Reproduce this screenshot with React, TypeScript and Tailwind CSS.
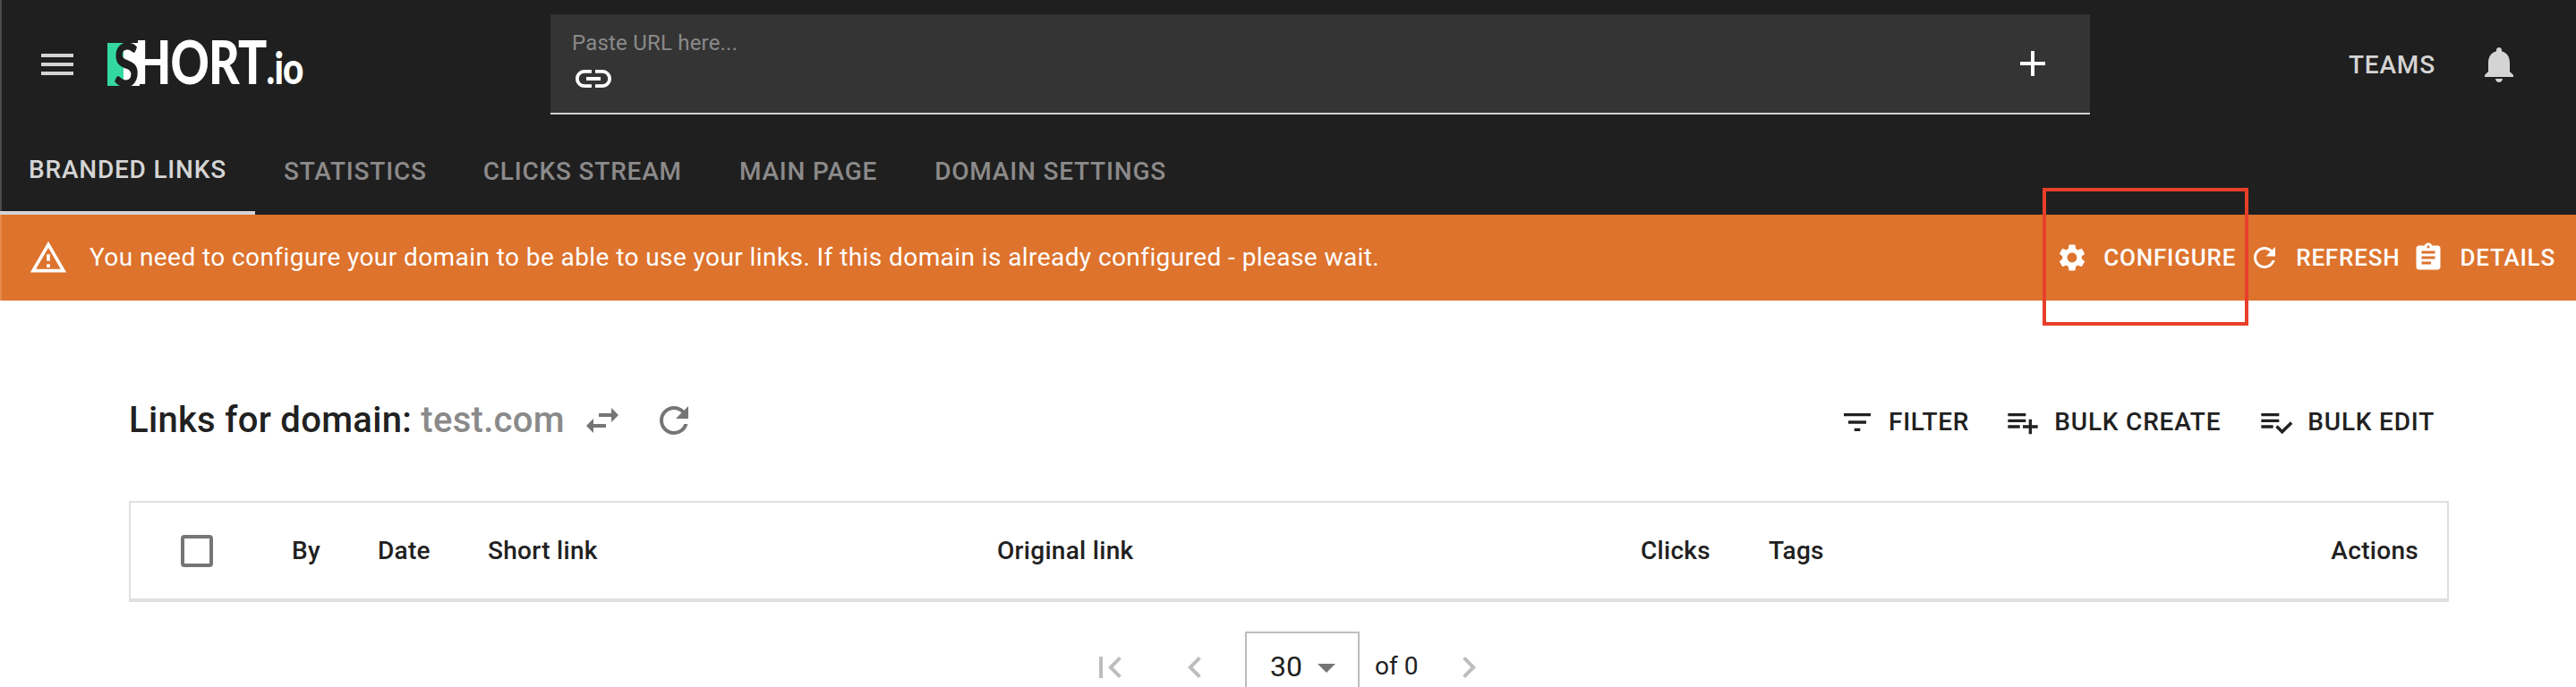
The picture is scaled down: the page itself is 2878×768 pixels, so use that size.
import React from "react";

function Icon({ d, className }: { d: string; className: string }) {
  return (
    <svg viewBox="0 0 24 24" fill="currentColor" className={className}>
      <path d={d} />
    </svg>
  );
}

const menuPath = "M3 18h18v-2H3v2zm0-5h18v-2H3v2zm0-7v2h18V6H3z";
const linkPath =
  "M3.9 12c0-1.71 1.39-3.1 3.1-3.1h4V7H7c-2.76 0-5 2.24-5 5s2.24 5 5 5h4v-1.9H7c-1.71 0-3.1-1.39-3.1-3.1zM8 13h8v-2H8v2zm9-6h-4v1.9h4c1.71 0 3.1 1.39 3.1 3.1s-1.39 3.1-3.1 3.1h-4V17h4c2.76 0 5-2.24 5-5s-2.24-5-5-5z";
const addPath = "M19 13h-6v6h-2v-6H5v-2h6V5h2v6h6v2z";
const bellPath =
  "M12 22c1.1 0 2-.9 2-2h-4c0 1.1.89 2 2 2zm6-6v-5c0-3.07-1.64-5.64-4.5-6.32V4c0-.83-.67-1.5-1.5-1.5s-1.5.67-1.5 1.5v.68C7.63 5.36 6 7.92 6 11v5l-2 2v1h16v-1l-2-2z";
const warningPath =
  "M12 5.99L19.53 19H4.47L12 5.99M12 2L1 21h22L12 2zm1 14h-2v2h2v-2zm0-6h-2v4h2v-4z";
const gearPath =
  "M19.14 12.94c.04-.3.06-.61.06-.94 0-.32-.02-.64-.07-.94l2.03-1.58c.18-.14.23-.41.12-.61l-1.92-3.32c-.12-.22-.37-.29-.59-.22l-2.39.96c-.5-.38-1.03-.7-1.62-.94l-.36-2.54c-.04-.24-.24-.41-.48-.41h-3.84c-.24 0-.43.17-.47.41l-.36 2.54c-.59.24-1.13.57-1.62.94l-2.39-.96c-.22-.08-.47 0-.59.22L2.74 8.87c-.12.21-.08.47.12.61l2.03 1.58c-.05.3-.09.63-.09.94s.02.64.07.94l-2.03 1.58c-.18.14-.23.41-.12.61l1.92 3.32c.12.22.37.29.59.22l2.39-.96c.5.38 1.03.7 1.62.94l.36 2.54c.05.24.24.41.48.41h3.84c.24 0 .44-.17.47-.41l.36-2.54c.59-.24 1.13-.56 1.62-.94l2.39.96c.22.08.47 0 .59-.22l1.92-3.32c.12-.22.07-.47-.12-.61l-2.01-1.58zM12 15.6c-1.98 0-3.6-1.62-3.6-3.6s1.62-3.6 3.6-3.6 3.6 1.62 3.6 3.6-1.62 3.6-3.6 3.6z";
const refreshPath =
  "M17.65 6.35C16.2 4.9 14.21 4 12 4c-4.42 0-7.99 3.58-7.99 8s3.57 8 7.99 8c3.73 0 6.84-2.55 7.73-6h-2.08c-.82 2.33-3.04 4-5.65 4-3.31 0-6-2.69-6-6s2.69-6 6-6c1.66 0 3.14.69 4.22 1.78L13 11h7V4l-2.35 2.35z";
const clipboardPath =
  "M19 3h-4.18C14.4 1.84 13.3 1 12 1c-1.3 0-2.4.84-2.82 2H5c-1.1 0-2 .9-2 2v14c0 1.1.9 2 2 2h14c1.1 0 2-.9 2-2V5c0-1.1-.9-2-2-2zm-7 0c.55 0 1 .45 1 1s-.45 1-1 1-1-.45-1-1 .45-1 1-1zm2 14H7v-2h7v2zm3-4H7v-2h10v2zm0-4H7V7h10v2z";
const swapPath = "M6.99 11L3 15l3.99 4v-3H14v-2H6.99v-3zM21 9l-3.99-4v3H10v2h7.01v3L21 9z";
const filterPath = "M10 18h4v-2h-4v2zM3 6v2h18V6H3zm3 7h12v-2H6v2z";
const playlistAddPath =
  "M14 10H2v2h12v-2zm0-4H2v2h12V6zm4 8v-4h-2v4h-4v2h4v4h2v-4h4v-2h-4zM2 16h8v-2H2v2z";
const playlistCheckPath =
  "M14 10H2v2h12v-2zm0-4H2v2h12V6zM2 16h8v-2H2v2zm19.5-4.5L23 13l-6.99 7-4.51-4.5L13 14l3.01 3 5.49-5.5z";
const firstPagePath = "M18.41 16.59L13.82 12l4.59-4.59L17 6l-6 6 6 6zM6 6h2v12H6z";
const chevronLeftPath = "M15.41 7.41L14 6l-6 6 6 6 1.41-1.41L10.83 12z";
const chevronRightPath = "M10 6L8.59 7.41 13.17 12l-4.58 4.59L10 18l6-6z";
const caretPath = "M7 10l5 5 5-5z";

function Logo() {
  return (
    <div className="flex h-12 w-[219px] items-center">
      <div className="relative flex h-12 w-[36px] shrink-0">
        <div className="w-[18px] bg-[#34d9a1]" />
        <div className="w-[18px] bg-white" />
        <span className="absolute top-[-10px] left-[7px] origin-left scale-x-[0.78] font-[Lato,sans-serif] text-[66px] leading-[68px] font-black text-[#1f1f1f]">
          S
        </span>
      </div>
      <span className="ml-[-6px] origin-left scale-x-[0.81] font-[Lato,sans-serif] text-[66px] leading-[48px] font-black tracking-[-1px] whitespace-nowrap text-white">
        HORT<span className="text-[50px]">.io</span>
      </span>
    </div>
  );
}

function AlertButton({ d, label, className }: { d: string; label: string; className: string }) {
  return (
    <div className={`flex items-center ${className}`}>
      <Icon d={d} className="h-9 w-9" />
      <span className="ml-[17px] text-[26px] font-medium tracking-[0.8px]">{label}</span>
    </div>
  );
}

function ToolButton({ d, label, className }: { d: string; label: string; className?: string }) {
  return (
    <div className={`flex items-center ${className ?? ""}`}>
      <Icon d={d} className="h-10 w-10" />
      <span className="ml-[15px] text-[28px] font-medium tracking-[0.8px]">{label}</span>
    </div>
  );
}

export default function App() {
  return (
    <div className="relative h-[768px] w-full overflow-hidden bg-white font-[Roboto,sans-serif]">
      <header className="h-[240px] border-l-2 border-[#4a4a4a] bg-[#1f1f1f]">
        <div className="flex h-[144px] items-center">
          <button className="ml-[38px] text-[#d4d4d4]">
            <Icon d={menuPath} className="h-12 w-12" />
          </button>
          <div className="ml-[32px]">
            <Logo />
          </div>
          <div className="ml-[276px] flex h-[112px] w-[1720px] items-center justify-between border-b-2 border-[#d0d0d0] bg-[#343434] pr-[40px] pl-[24px]">
            <div className="mt-[4px] flex flex-col">
              <span className="text-[24px] leading-[28px] tracking-[0.2px] text-[#8a8a8a]">Paste URL here...</span>
              <Icon d={linkPath} className="mt-[2px] h-12 w-12 text-white" />
            </div>
            <Icon d={addPath} className="h-12 w-12 text-white" />
          </div>
          <span className="mt-[2px] ml-[289px] text-[28px] font-medium tracking-[0.8px] text-[#d4d4d4]">TEAMS</span>
          <Icon d={bellPath} className="ml-[47px] h-12 w-12 text-[#d4d4d4]" />
        </div>
        <nav className="ml-[-2px] flex h-[96px] text-[28px] font-medium tracking-[0.8px] text-[#8c8a8a]">
          <div className="flex h-full w-[285px] items-center justify-center border-b-4 border-[#d4d4d4] text-[#d4d4d4]">
            BRANDED LINKS
          </div>
          <div className="ml-[32px] flex items-center">STATISTICS</div>
          <div className="ml-[63px] flex items-center">CLICKS STREAM</div>
          <div className="ml-[64px] flex items-center">MAIN PAGE</div>
          <div className="ml-[64px] flex items-center">DOMAIN SETTINGS</div>
        </nav>
      </header>

      <div className="flex h-[96px] items-center border-l-2 border-[#e58a4e] bg-[#dd732d] text-white">
        <Icon d={warningPath} className="ml-[30px] h-11 w-11" />
        <span className="ml-[24px] text-[28px] tracking-[0.42px]">
          You need to configure your domain to be able to use your links. If this domain is already configured - please wait.
        </span>
        <AlertButton d={gearPath} label="CONFIGURE" className="ml-auto" />
        <AlertButton d={refreshPath} label="REFRESH" className="ml-[14px]" />
        <AlertButton d={clipboardPath} label="DETAILS" className="mr-[23px] ml-[14px]" />
      </div>

      <main className="ml-[144px] w-[2592px]">
        <div className="flex h-[224px] items-center pt-[44px] pr-[16px]">
          <h1 className="text-[40px] font-medium tracking-[0.3px] text-[#212121]">
            Links for domain: <span className="text-[#8a8a8a]">test.com</span>
          </h1>
          <Icon d={swapPath} className="ml-[18px] h-12 w-12 text-[#757575]" />
          <Icon d={refreshPath} className="ml-[32px] h-12 w-12 text-[#757575]" />
          <div className="mt-[3px] ml-auto flex items-center text-[#212121]">
            <ToolButton d={filterPath} label="FILTER" />
            <ToolButton d={playlistAddPath} label="BULK CREATE" className="ml-[40px]" />
            <ToolButton d={playlistCheckPath} label="BULK EDIT" className="ml-[42px]" />
          </div>
        </div>

        <div className="flex h-[113px] items-center border-2 border-b-[4px] border-[#e0e0e0] text-[28px] font-medium tracking-[0.3px] text-[#212121]">
          <div className="ml-[56px] h-9 w-9 rounded-[4px] border-4 border-[#757575]" />
          <span className="ml-[88px] w-[96px]">By</span>
          <span className="w-[123px]">Date</span>
          <span className="w-[569px]">Short link</span>
          <span className="w-[719px]">Original link</span>
          <span className="w-[143px]">Clicks</span>
          <span>Tags</span>
          <span className="mr-[32px] ml-auto">Actions</span>
        </div>

        <div className="mt-[33px] flex h-[100px] items-start text-[#212121]">
          <Icon d={firstPagePath} className="mt-[16px] ml-[1072px] h-12 w-12 text-[#bdbdbd]" />
          <Icon d={chevronLeftPath} className="mt-[16px] ml-[47px] h-12 w-12 text-[#bdbdbd]" />
          <div className="ml-[32px] flex h-[100px] w-[128px] items-start border-2 border-[#bdbdbd] pt-[15px] pl-[26px] text-[32px] leading-[44px]">
            30
            <Icon d={caretPath} className="mt-[-1px] ml-[3px] h-12 w-12 text-[#757575]" />
          </div>
          <span className="mt-[17px] ml-[17px] text-[28px] leading-[44px]">of 0</span>
          <Icon d={chevronRightPath} className="mt-[16px] ml-[33px] h-12 w-12 text-[#bdbdbd]" />
        </div>
      </main>

      {/* red marker drawn over the screenshot */}
      <div className="absolute top-[210px] left-[2282px] h-[154px] w-[230px] border-4 border-[#e83f2a]" />
    </div>
  );
}
